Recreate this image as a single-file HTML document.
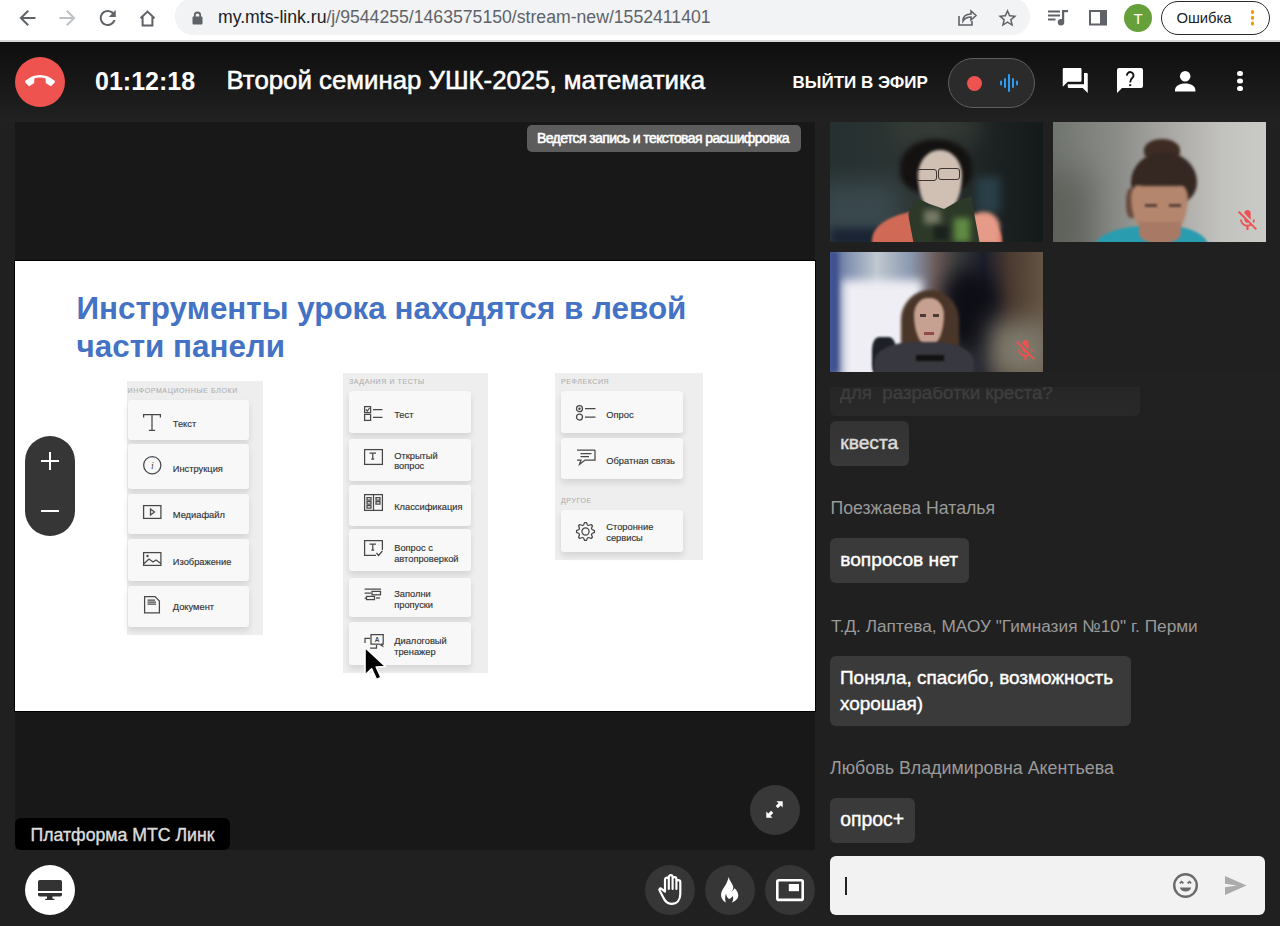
<!DOCTYPE html>
<html><head><meta charset="utf-8">
<style>
*{margin:0;padding:0;box-sizing:border-box}
html,body{width:1280px;height:926px;overflow:hidden;background:#202020;font-family:"Liberation Sans",sans-serif;position:relative}
.abs{position:absolute}
svg{position:absolute;overflow:visible}
.t{position:absolute;white-space:nowrap;line-height:1}
#chrome{left:0;top:0;width:1280px;height:40px;background:#fff}
#chromeline{left:0;top:40px;width:1280px;height:2px;background:#d6d6d6}
#url{left:175px;top:-2px;width:855px;height:36.5px;border-radius:18px;background:#f1f3f4}
#header{left:0;top:42px;width:1280px;height:80px;background:linear-gradient(#0e0e0e,#212121)}
#video{left:15px;top:122px;width:800px;height:728px;background:#181818}
#slide{left:15px;top:261px;width:800px;height:450px;background:#fff;box-shadow:0 0 0 1px #000;overflow:hidden}
.thumb{width:213px;height:120px;overflow:hidden}
.bubble{position:absolute;background:#3a3a3a;border-radius:6px}
.bt{position:absolute;white-space:nowrap;line-height:1;color:#fff;font-size:19.2px;-webkit-text-stroke:0.4px #fff}
.name{position:absolute;white-space:nowrap;line-height:1;color:#9a9a9a}
.cbtn{width:50px;height:50px;border-radius:25px;background:#363636}
</style></head><body>
<!-- ============ CHROME ============ -->
<div id="chrome" class="abs"></div>
<div id="chromeline" class="abs"></div>
<div id="url" class="abs"></div>
<div class="t" style="left:218px;top:8.8px;font-size:17.65px;color:#5f6368"><span style="color:#202124">my.mts-link.ru</span>/j/9544255/1463575150/stream-new/1552411401</div>
<!-- back -->
<svg style="left:19px;top:9.5px" width="17" height="16" viewBox="4 4 16 16"><path fill="#5f6368" d="M20 11H7.83l5.59-5.59L12 4l-8 8 8 8 1.41-1.41L7.83 13H20v-2z"/></svg>
<svg style="left:59px;top:9.5px" width="17" height="16" viewBox="4 4 16 16"><path fill="#bdc1c6" d="M4 11h12.17l-5.59-5.59L12 4l8 8-8 8-1.41-1.41L16.17 13H4v-2z"/></svg>
<svg style="left:99px;top:9.5px" width="17.5" height="16" viewBox="4 4 16 16"><path fill="#5f6368" d="M17.65 6.35C16.2 4.9 14.21 4 12 4c-4.42 0-7.99 3.58-7.99 8s3.57 8 7.99 8c3.73 0 6.84-2.55 7.73-6h-2.08c-.82 2.33-3.04 4-5.65 4-3.31 0-6-2.69-6-6s2.69-6 6-6c1.66 0 3.14.69 4.22 1.78L13 11h7V4l-2.35 2.35z"/></svg>
<svg style="left:139px;top:9.5px" width="17" height="16.5" viewBox="0 0 17 16.5"><path fill="none" stroke="#5f6368" stroke-width="2" stroke-linejoin="miter" d="M1.5 8.2 L8.5 1.6 L15.5 8.2 M3.6 6.6 V15.5 H13.4 V6.6"/></svg>
<!-- lock -->
<svg style="left:192px;top:10.5px" width="11" height="13.5" viewBox="0 0 11 13.5"><path fill="none" stroke="#5f6368" stroke-width="1.8" d="M2.8 6 V4.2 A2.7 2.7 0 0 1 8.2 4.2 V6"/><rect x="0.5" y="5.5" width="10" height="8" rx="1" fill="#5f6368"/></svg>
<!-- share -->
<svg style="left:958px;top:9px" width="19" height="17" viewBox="0 0 19 17"><path fill="none" stroke="#5f6368" stroke-width="1.6" d="M1 7 V16 H14 V12 M5 12 C5 7 8.5 5 13 5 V2 L18 6.5 L13 11 V8 C9.5 8 7 9 5 12 Z"/></svg>
<!-- star -->
<svg style="left:997.5px;top:8.5px" width="19" height="18" viewBox="2 2 20 19.5"><path fill="#5f6368" d="M22 9.24l-7.19-.62L12 2 9.19 8.63 2 9.24l5.46 4.73L5.82 21 12 17.27 18.18 21l-1.63-7.03L22 9.24zM12 15.4l-3.76 2.27 1-4.28-3.32-2.88 4.38-.38L12 6.1l1.71 4.04 4.38.38-3.32 2.88 1 4.28L12 15.4z"/></svg>
<!-- playlist -->
<svg style="left:1047.5px;top:10px" width="20" height="15.5" viewBox="0 0 20 15.5"><g fill="#5f6368"><rect x="0" y="0.5" width="12" height="2"/><rect x="0" y="4.5" width="12" height="2"/><rect x="0" y="8.5" width="7.5" height="2"/><rect x="14" y="0" width="2.2" height="12"/><rect x="14" y="0" width="6" height="2.2"/><circle cx="13" cy="12.2" r="3.2"/></g></svg>
<!-- side panel -->
<svg style="left:1088.5px;top:10px" width="18" height="15.5" viewBox="0 0 18 15.5"><rect x="1" y="1" width="16" height="13.5" fill="none" stroke="#5f6368" stroke-width="2"/><rect x="11" y="1" width="6" height="13.5" fill="#5f6368"/></svg>
<!-- avatar -->
<div class="abs" style="left:1124px;top:4px;width:28px;height:28px;border-radius:14px;background:#66a03a"></div>
<div class="t" style="left:1133.6px;top:10.6px;font-size:15px;color:#fff">T</div>
<!-- error pill -->
<div class="abs" style="left:1160.5px;top:1px;width:109px;height:34px;border-radius:17px;border:1.5px solid #2a2a2a;background:#fff"></div>
<div class="t" style="left:1176.4px;top:10.8px;font-size:14.8px;color:#202124">Ошибка</div>
<div class="abs" style="left:1250.5px;top:10px;width:3.5px;height:3.5px;border-radius:2px;background:#f29900;box-shadow:0 5.8px 0 #f29900,0 11.6px 0 #f29900"></div>

<!-- ============ HEADER ============ -->
<div id="header" class="abs"></div>
<div class="abs" style="left:15px;top:57px;width:50px;height:50px;border-radius:25px;background:#ef5350"></div>
<svg style="left:25px;top:75.4px" width="30" height="11.6" viewBox="0 7 24 9.3"><path fill="#fff" d="M12 9c-1.6 0-3.15.25-4.6.72v3.1c0 .39-.23.74-.56.9-.98.49-1.87 1.12-2.66 1.85-.18.18-.43.28-.7.28-.28 0-.53-.11-.71-.29L.29 13.08c-.18-.17-.29-.42-.29-.7 0-.28.11-.53.29-.71C3.34 8.78 7.46 7 12 7s8.66 1.78 11.71 4.67c.18.18.29.43.29.71 0 .28-.11.53-.29.71l-2.48 2.48c-.18.18-.43.29-.71.29-.27 0-.52-.11-.7-.28-.79-.74-1.69-1.36-2.67-1.850-.33-.16-.56-.5-.56-.9v-3.1C15.15 9.25 13.6 9 12 9z"/></svg>
<div class="t" style="left:95px;top:68.8px;color:#fff;font-size:25px;font-weight:bold">01:12:18</div>
<div class="t" style="left:226.5px;top:67.56px;color:#fff;font-size:25.8px;-webkit-text-stroke:0.55px #fff">Второй семинар УШК-2025, математика</div>
<div class="t" style="left:792.5px;top:73.6px;color:#fff;font-size:17px;font-weight:bold">ВЫЙТИ В ЭФИР</div>
<div class="abs" style="left:948px;top:58px;width:87px;height:50px;border-radius:25px;background:#2b2b2b;border:1px solid #5e5e5e"></div>
<div class="abs" style="left:966.5px;top:75.5px;width:15px;height:15px;border-radius:8px;background:#ef5350"></div>
<svg style="left:1000px;top:74px" width="18" height="18" viewBox="0 0 18 18"><g stroke="#2f9bf0" stroke-width="2" stroke-linecap="round"><path d="M1 7.5v3"/><path d="M5 5v8"/><path d="M9 1v16"/><path d="M13 5v8"/><path d="M17 7.5v3"/></g></svg>
<!-- forum -->
<svg style="left:1062px;top:68px" width="26.5" height="25" viewBox="2 2 20 20"><path fill="#fff" d="M21 6h-2v9H6v2c0 .55.45 1 1 1h11l4 4V7c0-.55-.45-1-1-1zm-4 6V3c0-.55-.45-1-1-1H3c-.55 0-1 .45-1 1v14l4-4h10c.55 0 1-.45 1-1z"/></svg>
<!-- help bubble -->
<svg style="left:1117px;top:68px" width="26" height="25" viewBox="0 0 26 25"><path fill="#fff" d="M2 0 H24 A2 2 0 0 1 26 2 V18 A2 2 0 0 1 24 20 H5 L0 25 V2 A2 2 0 0 1 2 0 Z"/><path d="M9.9 7.6 A3.3 3.3 0 1 1 15.4 9.8 C14 11 13.2 11.8 13.2 14.4" fill="none" stroke="#121212" stroke-width="1.9"/><rect x="12.2" y="16.2" width="2" height="1.9" fill="#121212"/></svg>
<!-- person -->
<svg style="left:1174.8px;top:70.6px" width="20.4" height="20.6" viewBox="0 0 20.4 20.6"><circle cx="10.2" cy="5.25" r="5.25" fill="#fff"/><path fill="#fff" d="M0 20.6 V19.2 C0 14.8 4.6 12.5 10.2 12.5 C15.8 12.5 20.4 14.8 20.4 19.2 V20.6 Z"/></svg>
<div class="abs" style="left:1237.3px;top:71px;width:5.3px;height:5.3px;border-radius:3px;background:#fff;box-shadow:0 7.5px 0 #fff,0 15px 0 #fff"></div>

<!-- ============ VIDEO ============ -->
<div id="video" class="abs"></div>
<div class="abs" style="left:526.5px;top:125px;width:274.5px;height:27px;border-radius:5px;background:#5c5c5c"></div>
<div class="t" style="left:537px;top:131.45px;color:#fff;font-size:14px;letter-spacing:-0.6px;-webkit-text-stroke:0.55px #fff">Ведется запись и текстовая расшифровка</div>
<div id="slide" class="abs">
<div class="t" style="left:61.5px;top:31.6px;font-size:31.4px;color:#4472c4;font-weight:bold;">Инструменты урока находятся в левой</div>
<div class="t" style="left:61.5px;top:70.4px;font-size:31.4px;color:#4472c4;font-weight:bold;">части панели</div>
<div class="abs" style="left:112.0px;top:120.0px;width:136.0px;height:253.5px;background:#eeeeee"></div>
<div class="t" style="left:112.5px;top:125.6px;font-size:7.0px;color:#b0b0b0;font-weight:normal;letter-spacing:0.6px;-webkit-text-stroke:0.1px #b0b0b0">ИНФОРМАЦИОННЫЕ БЛОКИ</div>
<div class="abs" style="left:112.6px;top:138.5px;width:121.4px;height:40.7px;background:#f8f8f8;border-radius:3px;box-shadow:0 4px 6px rgba(0,0,0,0.11)"></div>
<div class="t" style="left:157.8px;top:158.6px;font-size:9.3px;color:#333;font-weight:normal;-webkit-text-stroke:0.15px #333">Текст</div>
<div class="abs" style="left:112.6px;top:183.4px;width:121.4px;height:44.2px;background:#f8f8f8;border-radius:3px;box-shadow:0 4px 6px rgba(0,0,0,0.11)"></div>
<div class="t" style="left:157.8px;top:203.6px;font-size:9.3px;color:#333;font-weight:normal;-webkit-text-stroke:0.15px #333">Инструкция</div>
<div class="abs" style="left:112.6px;top:232.7px;width:121.4px;height:40.7px;background:#f8f8f8;border-radius:3px;box-shadow:0 4px 6px rgba(0,0,0,0.11)"></div>
<div class="t" style="left:157.8px;top:249.6px;font-size:9.3px;color:#333;font-weight:normal;-webkit-text-stroke:0.15px #333">Медиафайл</div>
<div class="abs" style="left:112.6px;top:278.0px;width:121.4px;height:41.5px;background:#f8f8f8;border-radius:3px;box-shadow:0 4px 6px rgba(0,0,0,0.11)"></div>
<div class="t" style="left:157.8px;top:296.6px;font-size:9.3px;color:#333;font-weight:normal;-webkit-text-stroke:0.15px #333">Изображение</div>
<div class="abs" style="left:112.6px;top:325.0px;width:121.4px;height:41.0px;background:#f8f8f8;border-radius:3px;box-shadow:0 4px 6px rgba(0,0,0,0.11)"></div>
<div class="t" style="left:157.8px;top:342.3px;font-size:9.3px;color:#333;font-weight:normal;-webkit-text-stroke:0.15px #333">Документ</div>
<svg style="left:128.0px;top:153.0px" width="18" height="17" viewBox="0 0 18 17"><path fill="none" stroke="#484848" stroke-width="1.25" d="M0.6 3.5 V0.6 H17.4 V3.5 M9 0.6 V16.4 M6 16.4 H12"/></svg>
<svg style="left:128.0px;top:195.3px" width="18.5" height="18.5" viewBox="0 0 18.5 18.5"><circle cx="9.25" cy="9.25" r="8.6" fill="none" stroke="#484848" stroke-width="1.25"/><text x="9.5" y="13" font-family="Liberation Serif" font-style="italic" font-size="10" fill="#484848" text-anchor="middle">i</text></svg>
<svg style="left:127.6px;top:244.3px" width="18.5" height="14" viewBox="0 0 18.5 14"><rect x="0.6" y="0.6" width="17.3" height="12.8" fill="none" stroke="#484848" stroke-width="1.25"/><path fill="none" stroke="#484848" stroke-width="1.25" d="M7.5 4 L11.5 7 L7.5 10 Z"/></svg>
<svg style="left:127.6px;top:291.3px" width="18.5" height="14" viewBox="0 0 18.5 14"><rect x="0.6" y="0.6" width="17.3" height="12.8" fill="none" stroke="#484848" stroke-width="1.25"/><path fill="none" stroke="#484848" stroke-width="1.25" d="M0.6 12 L6 7 L10 10 L13 8 L17.9 11.5"/><circle cx="4.5" cy="4" r="1.2" fill="#484848"/></svg>
<svg style="left:128.5px;top:334.5px" width="16" height="17.5" viewBox="0 0 16 17.5"><path fill="none" stroke="#484848" stroke-width="1.25" d="M0.6 0.6 H11 L15.4 5 V16.9 H0.6 Z"/><path fill="none" stroke="#484848" stroke-width="1.25" d="M3.5 4 H11 M3.5 6 H12 M3.5 8 H12"/></svg>
<div class="abs" style="left:327.5px;top:111.5px;width:145.1px;height:300.5px;background:#eeeeee"></div>
<div class="t" style="left:334.0px;top:117.3px;font-size:7.0px;color:#b0b0b0;font-weight:normal;letter-spacing:0.6px;-webkit-text-stroke:0.1px #b0b0b0">ЗАДАНИЯ И ТЕСТЫ</div>
<div class="abs" style="left:333.5px;top:130.4px;width:122.3px;height:41.6px;background:#f8f8f8;border-radius:3px;box-shadow:0 4px 6px rgba(0,0,0,0.11)"></div>
<div class="t" style="left:379.2px;top:150.4px;font-size:9.3px;color:#333;font-weight:normal;-webkit-text-stroke:0.15px #333">Тест</div>
<div class="abs" style="left:333.5px;top:178.0px;width:122.3px;height:41.5px;background:#f8f8f8;border-radius:3px;box-shadow:0 4px 6px rgba(0,0,0,0.11)"></div>
<div class="t" style="left:379.2px;top:190.6px;font-size:9.3px;color:#333;font-weight:normal;-webkit-text-stroke:0.15px #333">Открытый</div>
<div class="t" style="left:379.2px;top:201.3px;font-size:9.3px;color:#333;font-weight:normal;-webkit-text-stroke:0.15px #333">вопрос</div>
<div class="abs" style="left:333.5px;top:223.8px;width:122.3px;height:41.0px;background:#f8f8f8;border-radius:3px;box-shadow:0 4px 6px rgba(0,0,0,0.11)"></div>
<div class="t" style="left:379.2px;top:242.3px;font-size:9.3px;color:#333;font-weight:normal;-webkit-text-stroke:0.15px #333">Классификация</div>
<div class="abs" style="left:333.5px;top:268.3px;width:122.3px;height:41.7px;background:#f8f8f8;border-radius:3px;box-shadow:0 4px 6px rgba(0,0,0,0.11)"></div>
<div class="t" style="left:379.2px;top:283.3px;font-size:9.3px;color:#333;font-weight:normal;-webkit-text-stroke:0.15px #333">Вопрос с</div>
<div class="t" style="left:379.2px;top:294.0px;font-size:9.3px;color:#333;font-weight:normal;-webkit-text-stroke:0.15px #333">автопроверкой</div>
<div class="abs" style="left:333.5px;top:316.5px;width:122.3px;height:39.2px;background:#f8f8f8;border-radius:3px;box-shadow:0 4px 6px rgba(0,0,0,0.11)"></div>
<div class="t" style="left:379.2px;top:328.6px;font-size:9.3px;color:#333;font-weight:normal;-webkit-text-stroke:0.15px #333">Заполни</div>
<div class="t" style="left:379.2px;top:339.6px;font-size:9.3px;color:#333;font-weight:normal;-webkit-text-stroke:0.15px #333">пропуски</div>
<div class="abs" style="left:333.5px;top:361.0px;width:122.3px;height:42.8px;background:#f8f8f8;border-radius:3px;box-shadow:0 4px 6px rgba(0,0,0,0.11)"></div>
<div class="t" style="left:379.2px;top:376.0px;font-size:9.3px;color:#333;font-weight:normal;-webkit-text-stroke:0.15px #333">Диалоговый</div>
<div class="t" style="left:379.2px;top:387.4px;font-size:9.3px;color:#333;font-weight:normal;-webkit-text-stroke:0.15px #333">тренажер</div>
<svg style="left:349.0px;top:145.0px" width="19" height="15" viewBox="0 0 19 15"><rect x="0.6" y="0.6" width="6" height="6" fill="none" stroke="#484848" stroke-width="1.25"/><rect x="0.6" y="8.4" width="6" height="6" fill="none" stroke="#484848" stroke-width="1.25"/><path fill="none" stroke="#484848" stroke-width="1.25" d="M1.8 3.5 L3.3 5 L5.5 2 M9 3.5 H18.5 M9 11.4 H18.5"/></svg>
<svg style="left:349.0px;top:188.0px" width="19" height="16" viewBox="0 0 19 16"><rect x="0.6" y="0.6" width="17.8" height="14.8" fill="none" stroke="#484848" stroke-width="1.25"/><path fill="none" stroke="#484848" stroke-width="1.25" d="M5.5 4 H12 M8.75 4 V10 M7.3 10 H10.2"/></svg>
<svg style="left:349.0px;top:233.0px" width="19" height="17" viewBox="0 0 19 17"><rect x="0.6" y="0.6" width="17.8" height="15.8" fill="none" stroke="#484848" stroke-width="1.25"/><path fill="none" stroke="#484848" stroke-width="1.25" d="M9.5 0.6 V16.4 M3 3.5 H7 V6 H3 Z M3 7.5 H7 V10 H3 Z M3 11.5 H7 V14 H3 Z M12 3.5 H16 V6 H12 Z M12 7.5 H16 V10 H12 Z"/></svg>
<svg style="left:349.0px;top:279.0px" width="19" height="17" viewBox="0 0 19 17"><path fill="none" stroke="#484848" stroke-width="1.25" d="M12 15.4 H0.6 V0.6 H18.4 V10"/><path fill="none" stroke="#484848" stroke-width="1.25" d="M5.5 4 H12 M8.75 4 V10 M7.3 10 H10.2 M12.5 13 L14.5 15.5 L18.4 11"/></svg>
<svg style="left:349.0px;top:327.0px" width="18" height="13" viewBox="0 0 18 13"><path fill="none" stroke="#484848" stroke-width="1.25" d="M0.6 1 H17 M0.6 5 H7 M0.6 10 H2"/><rect x="8" y="3.4" width="8.5" height="3.4" fill="none" stroke="#484848" stroke-width="1.25"/><rect x="2.5" y="8.4" width="8" height="3.2" fill="none" stroke="#484848" stroke-width="1.25"/><path fill="none" stroke="#484848" stroke-width="1.25" d="M12 10 H16"/></svg>
<svg style="left:348.5px;top:373.0px" width="20" height="15" viewBox="0 0 20 15"><g fill="none" stroke="#484848" stroke-width="1.25"><path d="M6 4.3 H1 V9"/><path d="M6 14 H12.5 V11"/><path d="M7 0.7 H19.2 V10 H17.5 L18.5 12 L15 10 H7 Z"/></g><text x="13" y="8.3" font-family="Liberation Sans" font-weight="bold" font-size="6.5" fill="#444" text-anchor="middle">A</text></svg>
<div class="abs" style="left:539.6px;top:111.5px;width:148.7px;height:187.1px;background:#eeeeee"></div>
<div class="t" style="left:546.0px;top:117.0px;font-size:7.0px;color:#b0b0b0;font-weight:normal;letter-spacing:0.6px;-webkit-text-stroke:0.1px #b0b0b0">РЕФЛЕКСИЯ</div>
<div class="t" style="left:546.0px;top:235.7px;font-size:7.0px;color:#b0b0b0;font-weight:normal;letter-spacing:0.6px;-webkit-text-stroke:0.1px #b0b0b0">ДРУГОЕ</div>
<div class="abs" style="left:546.0px;top:130.0px;width:122.0px;height:42.0px;background:#f8f8f8;border-radius:3px;box-shadow:0 4px 6px rgba(0,0,0,0.11)"></div>
<div class="t" style="left:591.3px;top:149.6px;font-size:9.3px;color:#333;font-weight:normal;-webkit-text-stroke:0.15px #333">Опрос</div>
<div class="abs" style="left:546.0px;top:176.7px;width:122.0px;height:41.7px;background:#f8f8f8;border-radius:3px;box-shadow:0 4px 6px rgba(0,0,0,0.11)"></div>
<div class="t" style="left:591.3px;top:196.0px;font-size:9.3px;color:#333;font-weight:normal;-webkit-text-stroke:0.15px #333">Обратная связь</div>
<div class="abs" style="left:546.0px;top:248.7px;width:122.0px;height:42.8px;background:#f8f8f8;border-radius:3px;box-shadow:0 4px 6px rgba(0,0,0,0.11)"></div>
<div class="t" style="left:591.3px;top:261.9px;font-size:9.3px;color:#333;font-weight:normal;-webkit-text-stroke:0.15px #333">Сторонние</div>
<div class="t" style="left:591.3px;top:273.3px;font-size:9.3px;color:#333;font-weight:normal;-webkit-text-stroke:0.15px #333">сервисы</div>
<svg style="left:561.0px;top:144.0px" width="20" height="16" viewBox="0 0 20 16"><circle cx="3.5" cy="3.7" r="3" fill="none" stroke="#484848" stroke-width="1.25"/><circle cx="3.5" cy="3.7" r="1.2" fill="#484848"/><circle cx="3.5" cy="12" r="3" fill="none" stroke="#484848" stroke-width="1.25"/><path fill="none" stroke="#484848" stroke-width="1.25" d="M9 3.7 H19.5 M9 12 H19.5"/></svg>
<svg style="left:561.0px;top:188.0px" width="20" height="17" viewBox="0 0 20 17"><path fill="none" stroke="#484848" stroke-width="1.25" d="M1 1 H19 M1 11 H5 L3.5 15.5 L9 11 H19 V1"/><path fill="none" stroke="#484848" stroke-width="1.25" d="M4.5 4.5 H15.5 M4.5 7.5 H13"/></svg>
<svg style="left:560.5px;top:261.0px" width="19" height="19" viewBox="0 0 19 19"><polygon points="18.46,8.62 18.46,10.38 16.01,11.47 15.50,12.71 16.46,15.21 15.21,16.46 12.71,15.50 11.47,16.01 10.38,18.46 8.62,18.46 7.53,16.01 6.29,15.50 3.79,16.46 2.54,15.21 3.50,12.71 2.99,11.47 0.54,10.38 0.54,8.62 2.99,7.53 3.50,6.29 2.54,3.79 3.79,2.54 6.29,3.50 7.53,2.99 8.62,0.54 10.38,0.54 11.47,2.99 12.71,3.50 15.21,2.54 16.46,3.79 15.50,6.29 16.01,7.53" fill="none" stroke="#484848" stroke-width="1.25" stroke-linejoin="round"/><circle cx="9.5" cy="9.5" r="3.6" fill="none" stroke="#484848" stroke-width="1.25"/></svg>
<svg style="left:348.0px;top:385.0px" width="26" height="36" viewBox="0 0 26 36"><path d="M2 1.5 L2 29 L8.6 22.8 L13.5 33.5 L18 31.5 L13.2 21 L22.5 20.5 Z" fill="#000" stroke="#fff" stroke-width="1.6" stroke-linejoin="round"/></svg>
</div><!--/SLIDE-->
<!-- zoom pill -->
<div class="abs" style="left:25px;top:436px;width:50px;height:100px;border-radius:25px;background:#363636"></div>
<div class="abs" style="left:41px;top:460px;width:18px;height:2px;background:#fff"></div>
<div class="abs" style="left:49px;top:452px;width:2px;height:18px;background:#fff"></div>
<div class="abs" style="left:41px;top:510px;width:18px;height:2px;background:#fff"></div>
<!-- expand -->
<div class="abs cbtn" style="left:750px;top:785px;background:#383838"></div>
<svg style="left:766px;top:801px" width="17" height="17" viewBox="0 0 17 17"><g fill="#fff"><path d="M10.5 0.3 H16.7 V6.5 L14.7 4.5 L11.9 7.3 L9.7 5.1 L12.5 2.3 Z"/><path d="M6.5 16.7 H0.3 V10.5 L2.3 12.5 L5.1 9.7 L7.3 11.9 L4.5 14.7 Z"/></g></svg>
<!-- platform label -->
<div class="abs" style="left:15px;top:818px;width:215px;height:32px;border-radius:6px;background:#000"></div>
<div class="t" style="left:30.5px;top:826.6px;color:#dcdcdc;font-size:17.7px;-webkit-text-stroke:0.4px #dcdcdc">Платформа МТС Линк</div>

<!-- ============ BOTTOM BAR ============ -->
<div class="abs" style="left:25px;top:865px;width:50px;height:50px;border-radius:25px;background:#fff"></div>
<svg style="left:38px;top:880px" width="24" height="20" viewBox="0 0 24 20"><path fill="#333" d="M1.8 0 H22.2 A1.8 1.8 0 0 1 24 1.8 V10.9 H0 V1.8 A1.8 1.8 0 0 1 1.8 0 Z M0 13.1 H24 V14.8 A1.8 1.8 0 0 1 22.2 16.6 H1.8 A1.8 1.8 0 0 1 0 14.8 Z M9 16.5 H14.5 V18.8 H16.4 V20 H7.2 V18.8 H9 Z"/></svg>
<div class="abs cbtn" style="left:645px;top:865px"></div>
<div class="abs cbtn" style="left:705px;top:865px"></div>
<div class="abs cbtn" style="left:765px;top:865px"></div>
<!-- hand -->
<svg style="left:658px;top:874px" width="24" height="31" viewBox="0 0 24 31"><path fill="none" stroke="#fff" stroke-width="2.2" stroke-linejoin="round" stroke-linecap="round" d="M7 17 V5.5 A1.9 1.9 0 0 1 10.8 5.5 V15 V3 A1.9 1.9 0 0 1 14.6 3 V15 V5 A1.9 1.9 0 0 1 18.4 5 V15 V8 A1.9 1.9 0 0 1 22.3 8 V20 C22.3 26 18.8 29.8 13.5 29.8 C9.2 29.8 6.8 27 5.3 23.5 L1.6 16.5 C0.9 15.2 1.9 14 3.1 14.6 L7 17.5"/></svg>
<!-- fire -->
<svg style="left:720.9px;top:876.6px" width="17.3" height="25.6" viewBox="0 0 17.3 25.6"><path fill="#fff" d="M7.4 0 C8.5 3.5 11.5 6.5 12.2 9.8 C12.6 11.5 11.6 13.4 10.4 14.9 C11.6 13.8 12.8 12.5 13.6 11.2 C15.8 13.2 17.3 15.8 17.3 18.6 C17.3 21.6 14.6 24.2 10.8 25.6 C12.4 23.6 12.6 21 11.6 19 C10.8 20.6 9.6 21.6 8.1 22 C6.6 21.4 5.4 19.4 5.1 16.6 C3.9 19.4 3.8 22.8 4.9 25.6 C1.8 23.8 0 21 0 18.2 C0 14.4 2.3 11.4 4.2 8.4 C5.8 5.8 7.2 3 7.4 0 Z"/></svg>
<!-- pip -->
<svg style="left:776px;top:878.6px" width="28" height="23" viewBox="0 0 28 23"><rect x="1.3" y="1.3" width="25.4" height="19.6" rx="1.5" fill="none" stroke="#fff" stroke-width="2.6"/><rect x="12.8" y="5" width="10.2" height="7.2" fill="#fff"/></svg>

<!-- ============ RIGHT PANEL ============ -->
<!--THUMBS-->
<!-- thumb 1 -->
<div class="abs thumb" style="left:830px;top:122px;background:linear-gradient(90deg,#263030 0%,#2a3232 25%,#303634 50%,#1e2424 72%,#141a1a 100%)">
 <div class="abs" style="left:-15px;top:60px;width:85px;height:75px;background:#3e4e54;filter:blur(12px);opacity:.8"></div>
 <div class="abs" style="left:60px;top:-10px;width:90px;height:30px;background:#384038;filter:blur(10px);opacity:.6"></div>
 <div class="abs" style="left:146px;top:55px;width:24px;height:36px;background:#2a4048;filter:blur(5px)"></div>
 <div class="abs" style="left:0;top:106px;width:50px;height:20px;background:#1a2434;filter:blur(4px)"></div>
 <div class="abs" style="left:70px;top:17px;width:72px;height:55px;border-radius:50% 50% 40% 40%;background:#141210;filter:blur(2.5px)"></div>
 <div class="abs" style="left:88px;top:28px;width:44px;height:64px;border-radius:48% 48% 46% 46% / 40% 40% 60% 60%;background:#d0c0b4;filter:blur(1.5px)"></div>
 <div class="abs" style="left:86px;top:47px;width:21px;height:12px;border-radius:3px;border:1.6px solid #3e3430;filter:blur(.5px)"></div>
 <div class="abs" style="left:108px;top:46px;width:22px;height:12px;border-radius:3px;border:1.6px solid #3e3430;filter:blur(.5px)"></div>
 <div class="abs" style="left:42px;top:88px;width:130px;height:60px;border-radius:45% 45% 0 0 / 50% 50% 0 0;background:#d06a56;filter:blur(1.2px)"></div>
 <div class="abs" style="left:140px;top:90px;width:30px;height:32px;border-radius:40% 50% 0 0;background:#e69a88;filter:blur(2px)"></div>
 <div class="abs" style="left:78px;top:72px;width:72px;height:50px;background:#2c3828;clip-path:polygon(12% 8%,30% 20%,50% 30%,72% 12%,88% 4%,92% 40%,100% 100%,8% 100%,0% 40%);filter:blur(1px)"></div>
 <div class="abs" style="left:94px;top:88px;width:16px;height:14px;background:#a8a890;filter:blur(3px);opacity:.6"></div>
 <div class="abs" style="left:124px;top:96px;width:16px;height:24px;background:#6a9a48;filter:blur(3px);opacity:.85"></div>
 <div class="abs" style="left:104px;top:104px;width:14px;height:14px;background:#1a221c;filter:blur(2px)"></div>
</div>
<!-- thumb 2 -->
<div class="abs thumb" style="left:1053px;top:122px;background:linear-gradient(90deg,#70746e 0%,#8a8c88 30%,#aaa8a4 55%,#c2c2be 80%,#cacac6 100%)">
 <div class="abs" style="left:-30px;top:50px;width:70px;height:100px;background:#4e524a;filter:blur(16px);opacity:.55"></div>
 <div class="abs" style="left:91px;top:17px;width:36px;height:22px;border-radius:50% 50% 40% 40%;background:#3e2c24;filter:blur(1.8px)"></div>
 <div class="abs" style="left:78px;top:30px;width:66px;height:50px;border-radius:50% 50% 25% 25% / 60% 60% 40% 40%;background:#352822;filter:blur(1.8px)"></div>
 <div class="abs" style="left:73px;top:66px;width:12px;height:30px;border-radius:40%;background:#6a4a3c;filter:blur(1.5px)"></div>
 <div class="abs" style="left:78px;top:56px;width:57px;height:64px;border-radius:40% 40% 50% 50% / 30% 30% 70% 70%;background:#b4866e;filter:blur(1.4px)"></div>
 <div class="abs" style="left:82px;top:52px;width:52px;height:12px;border-radius:50% 50% 20% 20%;background:#352822;filter:blur(1.8px)"></div>
 <div class="abs" style="left:92px;top:82px;width:12px;height:3px;background:#5a4038;filter:blur(.8px)"></div>
 <div class="abs" style="left:116px;top:82px;width:12px;height:3px;background:#5a4038;filter:blur(.8px)"></div>
 <div class="abs" style="left:40px;top:104px;width:115px;height:34px;border-radius:45% 35% 0 0 / 70% 60% 0 0;background:#2a9cb0;filter:blur(1px)"></div>
 <div class="abs" style="left:86px;top:100px;width:42px;height:22px;border-radius:0 0 50% 50%;background:#a87a66;filter:blur(1.2px)"></div>
</div>
<svg style="left:1238.3px;top:210px" width="19" height="20" viewBox="3 2 18 19"><path fill="#f05050" d="M19 11h-1.7c0 .74-.16 1.43-.43 2.05l1.23 1.230c.56-.98.9-2.09.9-3.28zm-4.020.17c0-.06.02-.11.02-.17V5c0-1.66-1.34-3-3-3S9 3.34 9 5v.18l5.980 5.99zM4.27 3L3 4.27l6.01 6.01V11c0 1.660 1.33 3 2.99 3 .22 0 .44-.03.65-.08l1.66 1.66c-.71.33-1.5.52-2.31.52-2.76 0-5.3-2.1-5.3-5.1H5c0 3.41 2.72 6.23 6 6.72V21h2v-3.28c.91-.13 1.77-.45 2.54-.9L19.73 21 21 19.730 4.27 3z"/></svg>
<!-- thumb 3 -->
<div class="abs thumb" style="left:830px;top:252px;background:linear-gradient(90deg,#4a5a90 0%,#8090b0 8%,#c0c8d0 22%,#8a98b0 38%,#6a5a58 50%,#3a3c3c 60%,#1c1e2c 72%,#4a3a30 84%,#645444 100%)">
 <div class="abs" style="left:12px;top:28px;width:80px;height:100px;background:#eeeef4;filter:blur(5px)"></div>
 <div class="abs" style="left:112px;top:18px;width:56px;height:80px;border-radius:40%;background:#0e0e16;filter:blur(10px)"></div>
 <div class="abs" style="left:160px;top:70px;width:60px;height:55px;background:#7e7a6c;filter:blur(12px)"></div>
 <div class="abs" style="left:0;top:0;width:8px;height:120px;background:#3e5090;filter:blur(2px)"></div>
 <div class="abs" style="left:71px;top:38px;width:58px;height:74px;border-radius:50% 50% 30% 30% / 40% 40% 30% 30%;background:#4a3628;filter:blur(1.8px)"></div>
 <div class="abs" style="left:84px;top:46px;width:30px;height:48px;border-radius:45% 45% 45% 45% / 35% 35% 65% 65%;background:#c6a090;filter:blur(1.3px)"></div>
 <div class="abs" style="left:90px;top:62px;width:6px;height:2.5px;background:#4a3a38;filter:blur(.6px)"></div>
 <div class="abs" style="left:103px;top:62px;width:6px;height:2.5px;background:#4a3a38;filter:blur(.6px)"></div>
 <div class="abs" style="left:94px;top:80px;width:10px;height:2.5px;background:#904a4a;filter:blur(.6px)"></div>
 <div class="abs" style="left:42px;top:85px;width:24px;height:40px;border-radius:30%;background:#1e2028;filter:blur(1px)"></div>
 <div class="abs" style="left:44px;top:90px;width:100px;height:40px;border-radius:40% 40% 0 0 / 50% 50% 0 0;background:#383840;filter:blur(1px)"></div>
 <div class="abs" style="left:86px;top:103px;width:28px;height:6px;background:#121212;filter:blur(1px)"></div>
</div>
<svg style="left:1016px;top:340px" width="19" height="20" viewBox="3 2 18 19"><path fill="#f05050" d="M19 11h-1.7c0 .74-.16 1.43-.43 2.05l1.23 1.230c.56-.98.9-2.09.9-3.28zm-4.020.17c0-.06.02-.11.02-.17V5c0-1.66-1.34-3-3-3S9 3.34 9 5v.18l5.980 5.99zM4.27 3L3 4.27l6.01 6.01V11c0 1.660 1.33 3 2.99 3 .22 0 .44-.03.65-.08l1.66 1.66c-.71.33-1.5.52-2.31.52-2.76 0-5.3-2.1-5.3-5.1H5c0 3.41 2.72 6.23 6 6.72V21h2v-3.28c.91-.13 1.77-.45 2.54-.9L19.73 21 21 19.730 4.27 3z"/></svg>
<!--/THUMBS-->

<!-- faded message -->
<div class="bubble" style="left:830px;top:372px;width:310px;height:43.5px;background:#2c2c2c"></div>
<div class="t" style="left:840px;top:383.7px;font-size:18.7px;-webkit-text-stroke:0.4px #565656;color:#565656">для &nbsp;разработки креста?</div>
<div class="bubble" style="left:830px;top:421px;width:79px;height:45px"></div>
<div class="bt" style="left:840.3px;top:432.95px">квеста</div>
<div class="abs" style="left:820px;top:372px;width:460px;height:14.5px;background:#212121"></div>
<div class="abs" style="left:820px;top:386.5px;width:460px;height:84px;background:linear-gradient(rgba(33,33,33,0.5),rgba(33,33,33,0))"></div>
<div class="name" style="left:830.5px;top:500px;font-size:17.7px">Поезжаева Наталья</div>
<div class="bubble" style="left:830px;top:538px;width:139px;height:45px"></div>
<div class="bt" style="left:840.2px;top:549.75px">вопросов нет</div>
<div class="name" style="left:831px;top:618px;font-size:17.26px">Т.Д. Лаптева, МАОУ "Гимназия №10" г. Перми</div>
<div class="bubble" style="left:830px;top:656px;width:301px;height:70px"></div>
<div class="bt" style="left:840px;top:669.3px;font-size:18.94px">Поняла, спасибо, возможность</div>
<div class="bt" style="left:840px;top:695.2px;font-size:18.94px">хорошая)</div>
<div class="name" style="left:830px;top:760.2px;font-size:17.83px">Любовь Владимировна Акентьева</div>
<div class="bubble" style="left:830px;top:798px;width:85px;height:44.5px"></div>
<div class="bt" style="left:840.2px;top:809.65px;font-size:19.4px">опрос+</div>
<!-- input -->
<div class="abs" style="left:830px;top:856px;width:435px;height:59px;border-radius:6px;background:#f2f2f2"></div>
<div class="abs" style="left:845px;top:877px;width:1.5px;height:18px;background:#222"></div>
<svg style="left:1173px;top:873px" width="25" height="25" viewBox="0 0 25 25"><circle cx="12.5" cy="12.5" r="11.3" fill="none" stroke="#6a6a6a" stroke-width="2.4"/><path d="M6.8 14.6 H18.2 C17.6 17.3 15.3 18.6 12.5 18.6 C9.7 18.6 7.4 17.3 6.8 14.6 Z" fill="#6a6a6a"/><path d="M6.8 10.4 L8.6 8.6 L10.4 10.4 M14.6 10.4 L16.4 8.6 L18.2 10.4" fill="none" stroke="#6a6a6a" stroke-width="1.7"/></svg>
<svg style="left:1225px;top:876px" width="21.5" height="19" viewBox="0 0 21.5 19"><path fill="#ababab" d="M0 0 L21.5 9.5 L0 19 V11.3 L12 9.5 L0 7.7 Z"/></svg>
</body></html>
